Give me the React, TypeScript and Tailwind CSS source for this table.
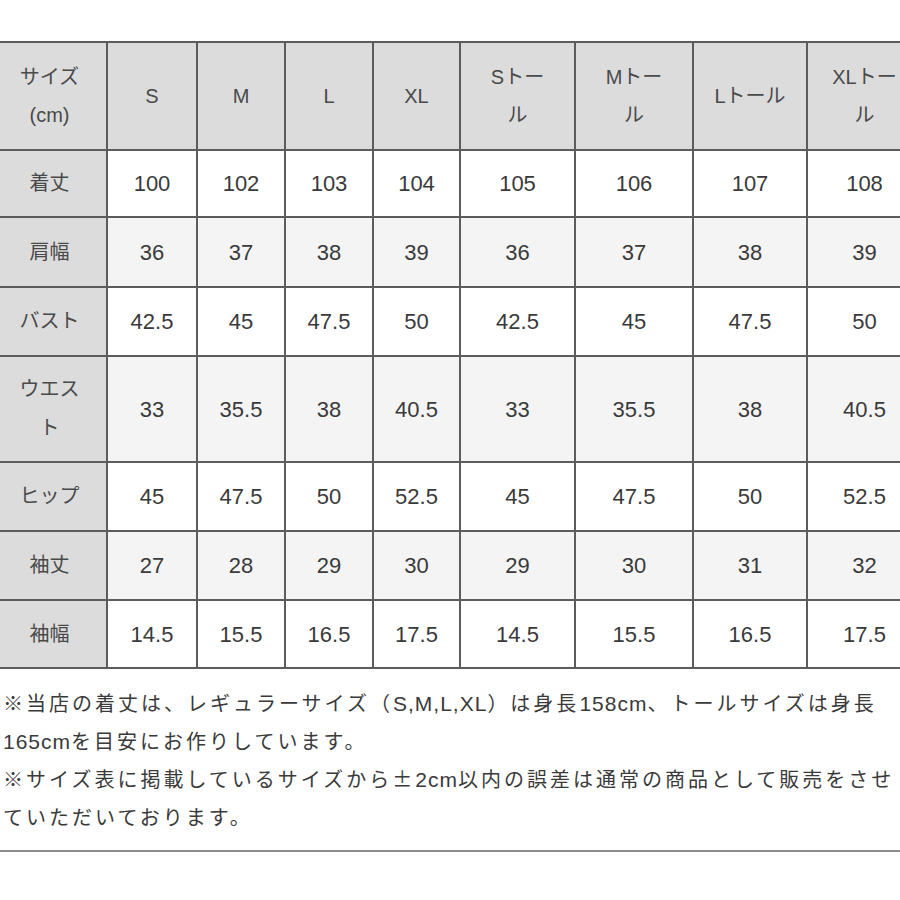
import React from "react";

const cols = [
  "w-[113px]",
  "w-[88px]",
  "w-[86px]",
  "w-[86px]",
  "w-[85px]",
  "w-[113px]",
  "w-[116px]",
  "w-[112px]",
  "w-[113px]",
];

type Row = { label: React.ReactNode; values: string[]; h: string; alt: boolean };

const header: React.ReactNode[] = [
  <>サイズ<br />(cm)</>,
  "S",
  "M",
  "L",
  "XL",
  <>Sトー<br />ル</>,
  <>Mトー<br />ル</>,
  "Lトール",
  <>XLトー<br />ル</>,
];

const rows: Row[] = [
  { label: "着丈", values: ["100", "102", "103", "104", "105", "106", "107", "108"], h: "h-[65px]", alt: false },
  { label: "肩幅", values: ["36", "37", "38", "39", "36", "37", "38", "39"], h: "h-[68px]", alt: true },
  { label: "バスト", values: ["42.5", "45", "47.5", "50", "42.5", "45", "47.5", "50"], h: "h-[67px]", alt: false },
  { label: <>ウエス<br />ト</>, values: ["33", "35.5", "38", "40.5", "33", "35.5", "38", "40.5"], h: "h-[104px]", alt: true },
  { label: "ヒップ", values: ["45", "47.5", "50", "52.5", "45", "47.5", "50", "52.5"], h: "h-[67px]", alt: false },
  { label: "袖丈", values: ["27", "28", "29", "30", "29", "30", "31", "32"], h: "h-[67px]", alt: true },
  { label: "袖幅", values: ["14.5", "15.5", "16.5", "17.5", "14.5", "15.5", "16.5", "17.5"], h: "h-[66px]", alt: false },
];

function Line({ text }: { text: string }) {
  const parts = text.match(/[A-Za-z0-9,.]+|[^A-Za-z0-9,.]+/g) || [];
  return (
    <div className="whitespace-nowrap h-[38px]">
      {parts.map((p, i) =>
        /^[A-Za-z0-9,.]+$/.test(p) ? (
          <span key={i} className="tracking-[1px] text-[21px] [font-family:'Liberation_Sans',sans-serif]">
            {p}
          </span>
        ) : (
          <span key={i}>{p}</span>
        )
      )}
    </div>
  );
}

export default function App() {
  return (
    <div className="w-[900px] h-[900px] overflow-hidden bg-white [font-family:'Liberation_Sans','Noto_Sans_CJK_JP',sans-serif]">
      <div className="pt-[41px] ml-[-9px]">
        <div className="inline-flex flex-col gap-[2px] bg-[#5c5c5c] p-[2px]">
          <div className="flex gap-[2px] h-[106px]">
            {header.map((h, i) => (
              <div
                key={i}
                className={`${cols[i]} shrink-0 bg-[#dcdcdc] flex items-center justify-center text-center text-[20px] leading-[38px] text-[#4a4a4a]`}
              >
                <div>{h}</div>
              </div>
            ))}
          </div>
          {rows.map((r, ri) => (
            <div key={ri} className={`flex gap-[2px] ${r.h}`}>
              <div className={`${cols[0]} shrink-0 bg-[#dcdcdc] flex items-center justify-center text-center text-[20px] leading-[39px] text-[#4a4a4a]`}>
                <div>{r.label}</div>
              </div>
              {r.values.map((v, vi) => (
                <div
                  key={vi}
                  className={`${cols[vi + 1]} shrink-0 ${r.alt ? "bg-[#f4f4f4]" : "bg-white"} flex items-center justify-center text-[22px] text-[#3a3a3a]`}
                >
                  {v}
                </div>
              ))}
            </div>
          ))}
        </div>
      </div>
      <div className="pt-[15px] pb-[14px] pl-[3px] border-b-2 border-[#8c8c8c] text-[20px] leading-[38px] tracking-[3px] text-[#3a3a3a] [font-family:'Noto_Sans_CJK_JP',sans-serif]">
        <Line text="※当店の着丈は、レギュラーサイズ（S,M,L,XL）は身長158cm、トールサイズは身長" />
        <Line text="165cmを目安にお作りしています。" />
        <Line text="※サイズ表に掲載しているサイズから±2cm以内の誤差は通常の商品として販売をさせ" />
        <Line text="ていただいております。" />
      </div>
    </div>
  );
}
